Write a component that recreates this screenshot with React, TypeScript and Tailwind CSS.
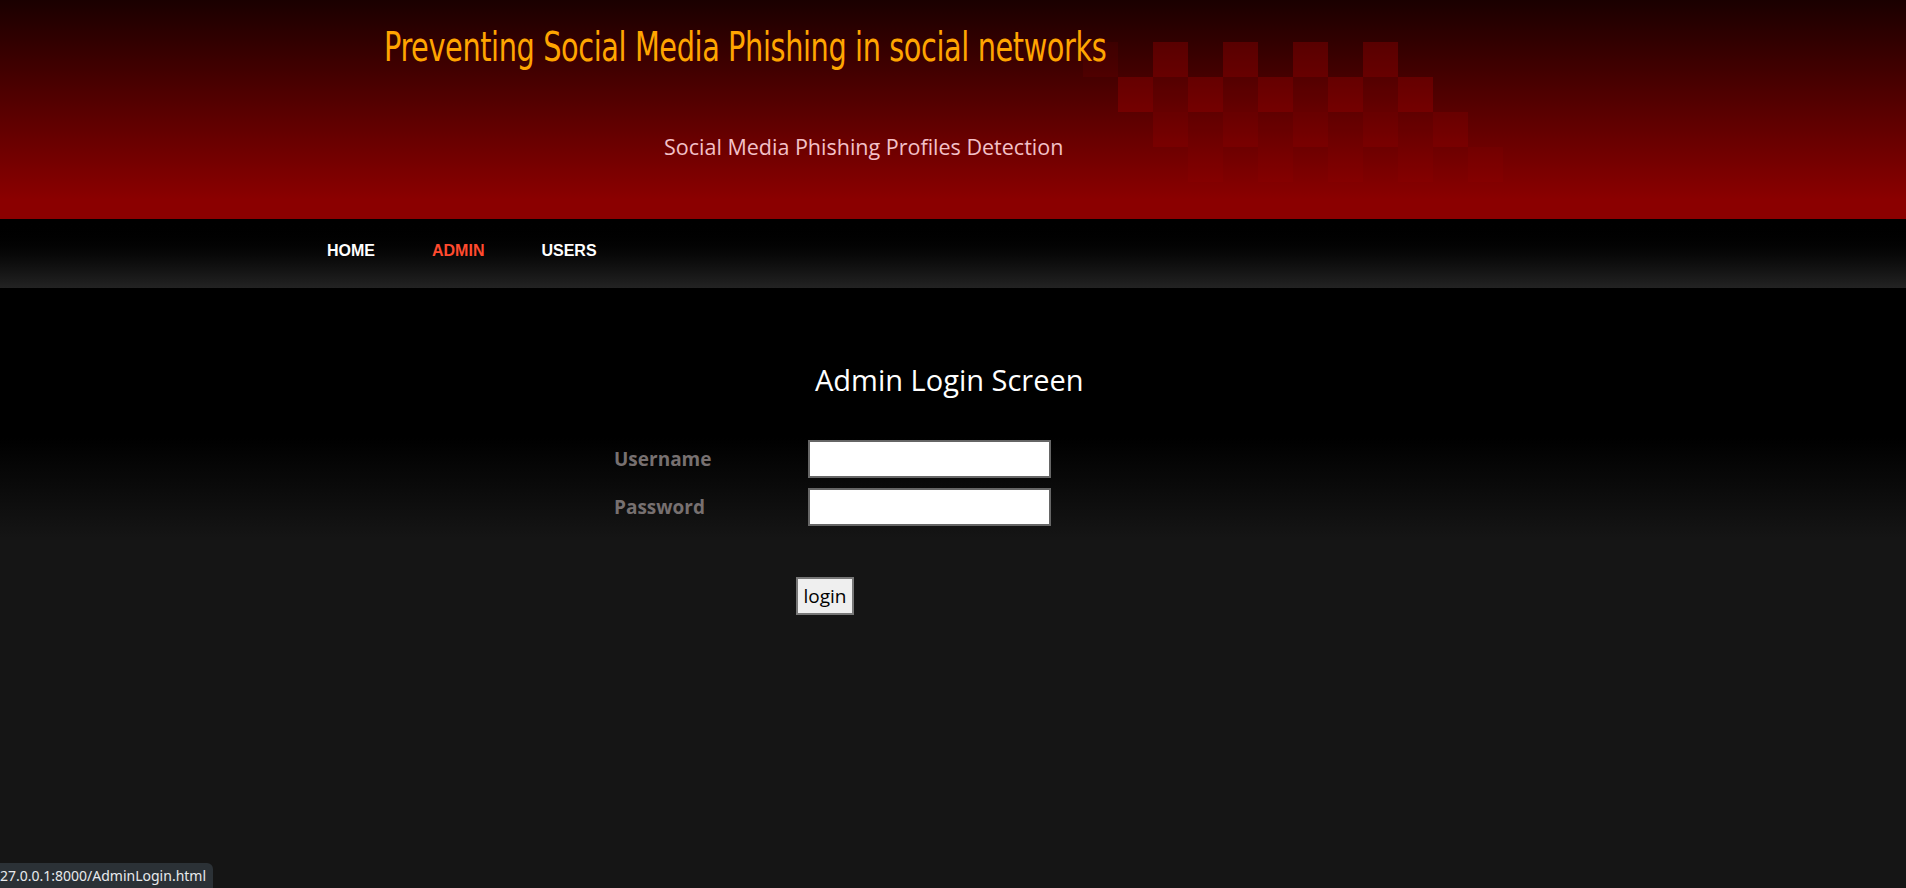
const NAV = [
  { label: "HOME", active: false },
  { label: "ADMIN", active: true },
  { label: "USERS", active: false },
];

// checker squares: [row, col, opacity]
const CHECKS: [number, number, number][] = [
  [0, 0, 0.07], [0, 2, 0.24], [0, 4, 0.24], [0, 6, 0.24], [0, 8, 0.24],
  [1, 1, 0.22], [1, 3, 0.22], [1, 5, 0.22], [1, 7, 0.22], [1, 9, 0.22],
  [1, 2, 0.1], [1, 4, 0.1], [1, 6, 0.1], [1, 8, 0.1],
  [2, 2, 0.12], [2, 4, 0.12], [2, 6, 0.12], [2, 8, 0.12], [2, 10, 0.12],
  [2, 3, 0.05], [2, 5, 0.05], [2, 7, 0.05], [2, 9, 0.05],
  [3, 3, 0.06], [3, 5, 0.06], [3, 7, 0.06], [3, 9, 0.06], [3, 11, 0.06],
];

function Checker() {
  return (
    <svg className="absolute left-[1083px] top-[42px]" width="455" height="140" viewBox="0 0 455 140">
      {CHECKS.map(([r, c, o], i) => (
        <rect key={i} x={c * 35} y={r * 35} width="35" height="35" fill="#d40000" fillOpacity={o} />
      ))}
    </svg>
  );
}

export default function App() {
  return (
    <div className="min-h-screen bg-[#151515] font-['Open_Sans',sans-serif]">
      <header className="relative h-[219px] overflow-hidden bg-[linear-gradient(to_bottom,#1a0000_0px,#8b0000_200px,#8b0000_219px)]">
        <Checker />
        <h1 className="relative pl-[384px] pt-[23px] font-['Liberation_Sans_Narrow','DejaVu_Sans_Condensed',sans-serif] text-[40px] leading-[48px] text-[#ffa500]">
          <span className="inline-block origin-left scale-x-[0.8] whitespace-nowrap tracking-[-0.5px]">
            Preventing Social Media Phishing in social networks
          </span>
        </h1>
        <p className="relative pl-[664px] pt-[62px] text-[21.5px] leading-[28px] text-[#f3c1c8]">
          Social Media Phishing Profiles Detection
        </p>
      </header>

      <nav className="flex h-[69px] items-center gap-[57px] bg-gradient-to-b from-black to-[#232323] pb-[6px] pl-[327px] font-['Liberation_Sans',Arial,sans-serif] text-[16px] font-bold">
        {NAV.map((n) => (
          <a key={n.label} href="#" className={n.active ? "text-[#ff4a2e]" : "text-white"}>
            {n.label}
          </a>
        ))}
      </nav>

      <main className="h-[600px] bg-[linear-gradient(to_bottom,#000_0px,#000_150px,#151515_250px)] pt-[74px]">
        <h2 className="pl-[815px] text-[29px] leading-[36px] text-white">Admin Login Screen</h2>
        <form className="mt-[42px] pl-[614px]" onSubmit={(e) => e.preventDefault()}>
          <div className="grid grid-cols-[194px_243px] gap-y-[10px] text-[19px] font-bold text-[#777070]">
            <label className="flex items-center">Username</label>
            <input type="text" className="h-[38px] border-2 border-[#666] bg-white outline-none" />
            <label className="flex items-center">Password</label>
            <input type="password" className="h-[38px] border-2 border-[#666] bg-white outline-none" />
          </div>
          <button className="ml-[182px] mt-[51px] h-[38px] w-[58px] border-2 border-[#777] bg-[#efefef] text-[19px] text-black">
            login
          </button>
        </form>
      </main>

      <div className="fixed bottom-0 left-0 h-[25px] w-[213px] rounded-tr-[6px] bg-[#2b3136] font-['Noto_Sans',sans-serif] text-[14px] leading-[25px] text-[#e8eaed]">
        27.0.0.1:8000/AdminLogin.html
      </div>
    </div>
  );
}
